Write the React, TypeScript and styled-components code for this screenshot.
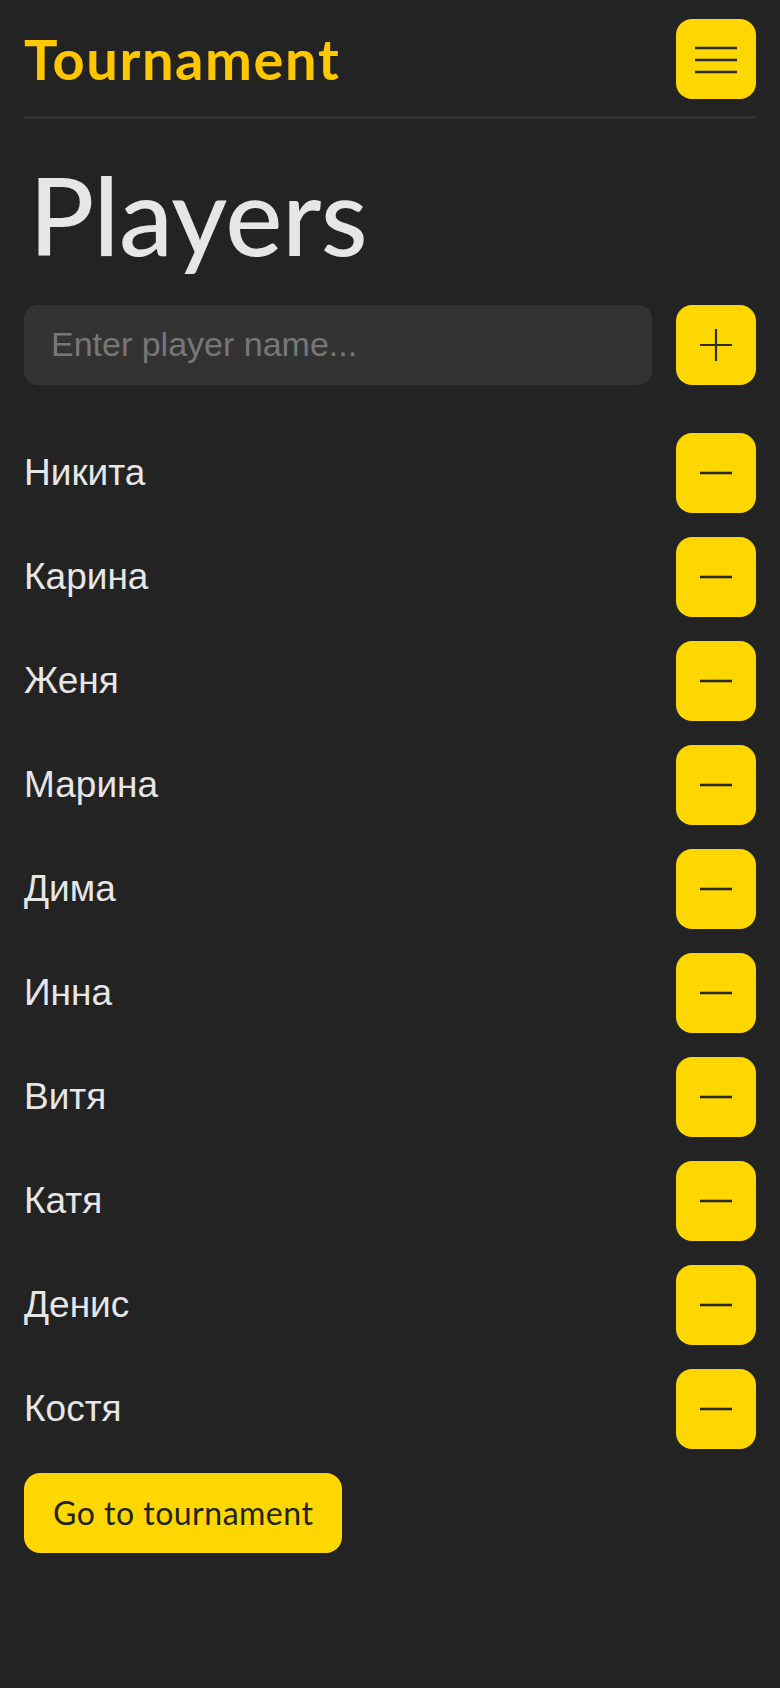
import React from "react";
import styled, { createGlobalStyle } from "styled-components";

const GlobalStyle = createGlobalStyle`
  html, body {
    margin: 0;
    padding: 0;
    background: #232323;
  }
  * { box-sizing: border-box; }
`;

const Page = styled.div`
  min-height: 1688px;
  background: #232323;
  padding: 19px 24px 40px;
  display: flex;
  flex-direction: column;
`;

const Header = styled.header`
  display: flex;
  align-items: center;
  justify-content: space-between;
`;

const Brand = styled.div`
  font-family: Lato, "Noto Sans", sans-serif;
  font-weight: 700;
  font-size: 56px;
  line-height: 1;
  color: #ffc700;
  letter-spacing: 1.6px;
`;

const YellowButton = styled.button`
  width: 80px;
  height: 80px;
  flex: 0 0 80px;
  border: none;
  border-radius: 16px;
  background: #ffd700;
  display: flex;
  align-items: center;
  justify-content: center;
  padding: 0;
  cursor: pointer;
  color: #2b2b2b;
`;

const Divider = styled.div`
  height: 3px;
  margin-top: 17px;
  background: #333333;
  border-radius: 2px;
`;

const Title = styled.h1`
  margin: 31px 0 0;
  padding-left: 5px;
  font-family: Lato, "Noto Sans", sans-serif;
  font-weight: 500;
  font-size: 108px;
  line-height: 1.2;
  color: #e6e6e6;
  letter-spacing: -0.4px;
`;

const InputRow = styled.div`
  margin-top: 25px;
  display: flex;
  align-items: center;
  gap: 24px;
`;

const NameInput = styled.input`
  flex: 1;
  height: 80px;
  border: none;
  outline: none;
  border-radius: 14px;
  background: #333333;
  padding: 0 27px;
  font-family: "Liberation Sans", Arial, sans-serif;
  font-size: 34px;
  color: #e6e6e6;
  &::placeholder {
    color: #777777;
  }
`;

const List = styled.ul`
  list-style: none;
  margin: 48px 0 0;
  padding: 0;
  display: flex;
  flex-direction: column;
  gap: 24px;
`;

const PlayerRow = styled.li`
  display: flex;
  align-items: center;
  justify-content: space-between;
`;

const PlayerName = styled.span`
  font-family: "Liberation Sans", Arial, sans-serif;
  font-size: 37px;
  color: #e6e6e6;
`;

const GoButton = styled.button`
  align-self: flex-start;
  margin-top: 24px;
  height: 80px;
  padding: 0 29px;
  border: none;
  border-radius: 16px;
  background: #ffd700;
  font-family: Lato, "Noto Sans", sans-serif;
  font-weight: 400;
  font-size: 32px;
  letter-spacing: 0.5px;
  color: #232323;
  cursor: pointer;
`;

const MenuIcon = () => (
  <svg width="42" height="30" viewBox="0 0 42 30" fill="none">
    <path d="M0 4H42M0 16H42M0 28H42" stroke="currentColor" strokeWidth="2.6" />
  </svg>
);

const PlusIcon = () => (
  <svg width="32" height="32" viewBox="0 0 32 32" fill="none">
    <path d="M0 16H32M16 0V32" stroke="currentColor" strokeWidth="2.2" />
  </svg>
);

const MinusIcon = () => (
  <svg width="32" height="4" viewBox="0 0 32 4" fill="none">
    <path d="M0 2H32" stroke="currentColor" strokeWidth="2.6" />
  </svg>
);

const players = [
  "Никита",
  "Карина",
  "Женя",
  "Марина",
  "Дима",
  "Инна",
  "Витя",
  "Катя",
  "Денис",
  "Костя",
];

export default function App() {
  return (
    <>
      <GlobalStyle />
      <Page>
        <Header>
          <Brand>Tournament</Brand>
          <YellowButton aria-label="Menu">
            <MenuIcon />
          </YellowButton>
        </Header>
        <Divider />
        <Title>Players</Title>
        <InputRow>
          <NameInput placeholder="Enter player name..." />
          <YellowButton aria-label="Add player">
            <PlusIcon />
          </YellowButton>
        </InputRow>
        <List>
          {players.map((p) => (
            <PlayerRow key={p}>
              <PlayerName>{p}</PlayerName>
              <YellowButton aria-label={`Remove ${p}`}>
                <MinusIcon />
              </YellowButton>
            </PlayerRow>
          ))}
        </List>
        <GoButton>Go to tournament</GoButton>
      </Page>
    </>
  );
}
